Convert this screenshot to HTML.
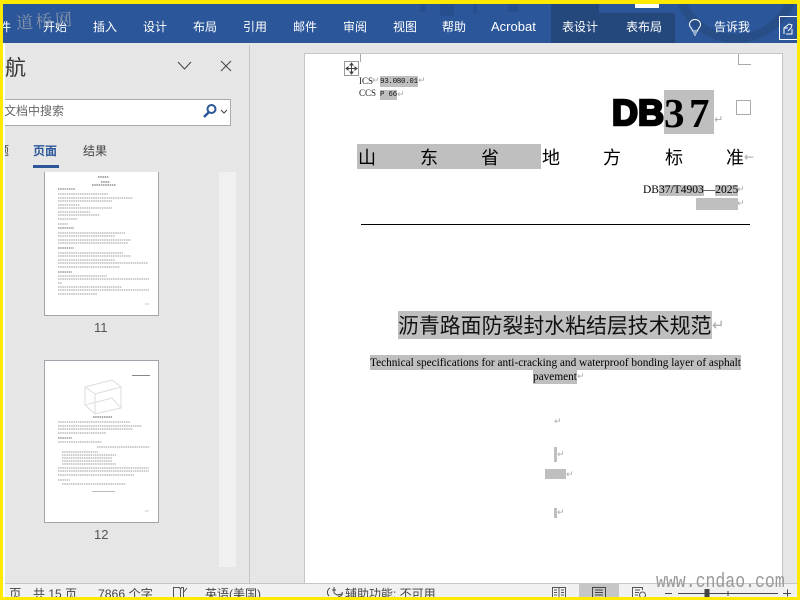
<!DOCTYPE html>
<html lang="zh"><head><meta charset="utf-8"><title>Word</title>
<style>
html,body{margin:0;padding:0;width:800px;height:600px;overflow:hidden;background:#fff}
body{position:relative;font-family:"Liberation Sans","Noto Sans CJK SC",sans-serif}
.a{position:absolute;white-space:nowrap}
.t{position:absolute;white-space:nowrap;color:#fff;font-size:12px;line-height:16px;top:19px}
.h{position:absolute;background:#bfbfbf}
.s{font-family:"Liberation Serif","Noto Sans CJK SC",serif;color:#000}
.c{position:absolute;white-space:nowrap;top:146px;font-size:18px;line-height:22px;color:#000;font-family:"Noto Sans CJK SC",sans-serif}
.m{position:absolute;color:#aaa;font-size:9px;line-height:10px;font-family:"DejaVu Sans",sans-serif}
.st{position:absolute;top:586px;font-size:12.500px;line-height:16px;color:#444;white-space:nowrap}
</style></head><body>

<!-- ribbon -->
<div class="a" style="left:3px;top:4px;width:794px;height:39px;background:#2b579a;overflow:hidden">
 <div class="a" style="left:670px;top:-87px;width:126px;height:126px;box-sizing:border-box;border-radius:50%;border:9px solid #284e88"></div>
 <div class="a" style="left:417px;top:0;width:6px;height:8px;background:#284f8d"></div>
 <div class="a" style="left:437px;top:0;width:14px;height:12px;background:#284f8d"></div>
 <div class="a" style="left:470px;top:0;width:4px;height:10px;background:#284f8d"></div>
 <div class="a" style="left:505px;top:0;width:10px;height:8px;background:#284f8d"></div>
 <div class="a" style="left:548px;top:9px;width:124px;height:30px;background:#24477c"></div>
 <div class="a" style="left:548px;top:0;width:48px;height:9px;background:#24477c"></div>
 <div class="a" style="left:632px;top:0;width:24px;height:4px;background:#fff"></div>
</div>
<div class="t" style="left:-1px">件</div>
<div class="t" style="left:43px">开始</div>
<div class="t" style="left:93px">插入</div>
<div class="t" style="left:143px">设计</div>
<div class="t" style="left:193px">布局</div>
<div class="t" style="left:243px">引用</div>
<div class="t" style="left:293px">邮件</div>
<div class="t" style="left:343px">审阅</div>
<div class="t" style="left:393px">视图</div>
<div class="t" style="left:442px">帮助</div>
<div class="t" style="left:491px;font-size:13px">Acrobat</div>
<div class="t" style="left:562px">表设计</div>
<div class="t" style="left:626px">表布局</div>
<div class="t" style="left:714px">告诉我</div>
<svg class="a" style="left:688px;top:19px" width="14" height="18" viewBox="0 0 14 18" fill="none" stroke="#fff" stroke-width="1"><path d="M4.500 12C4.500 9.500 1.500 8.500 1.500 5.500a5.500 5 0 0 1 11 0C12.500 8.500 9.500 9.500 9.500 12zM5 14h4M6 16h2"/></svg>
<svg class="a" style="left:779px;top:16px" width="18" height="24" viewBox="0 0 18 24" fill="none" stroke="#fff"><path d="M.5.500H18M.5.500V23.500H18"/><path d="M5 18v-6h4M5 12l5-4 3 1-1 3-3 3M7 18h6v-5"/></svg>

<!-- watermark -->
<div class="a" style="left:16px;top:8px;font-size:17px;line-height:24px;letter-spacing:2.500px;color:#8793a8;font-family:'Noto Serif CJK SC',serif;transform:rotate(-4deg)">道桥网</div>

<!-- nav pane -->
<div class="a" style="left:5px;top:43px;width:792px;height:540px;background:#e6e6e6"></div>
<div class="a" style="left:249px;top:45px;width:1px;height:538px;background:#c6c6c6"></div>
<div class="a" style="left:5px;top:56px;font-size:21px;line-height:26px;color:#333">航</div>
<svg class="a" style="left:176px;top:60px" width="18" height="12" fill="none" stroke="#444"><path d="M2 2l6.500 7L15 2"/></svg>
<svg class="a" style="left:219px;top:59px" width="14" height="14" fill="none" stroke="#444"><path d="M2 2l10 10M12 2L2 12"/></svg>
<div class="a" style="left:5px;top:99px;width:225px;height:25px;background:#fff;border:1px solid #ababab;border-left:0"></div>
<div class="a" style="left:4px;top:103px;font-size:12px;line-height:16px;color:#666">文档中搜索</div>
<svg class="a" style="left:202px;top:103px" width="16" height="16" fill="none" stroke="#2b579a" stroke-width="2"><circle cx="9.500" cy="6" r="4"/><path d="M7 9l-5 5" stroke-width="2.500"/></svg>
<svg class="a" style="left:220px;top:109px" width="8" height="6" fill="none" stroke="#444"><path d="M1 1l3 3 3-3"/></svg>
<div class="a" style="left:-3px;top:143px;font-size:12px;line-height:16px;color:#444">题</div>
<div class="a" style="left:33px;top:143px;font-size:12px;line-height:16px;color:#2b579a;font-weight:bold">页面</div>
<div class="a" style="left:33px;top:165px;width:26px;height:3px;background:#2b579a"></div>
<div class="a" style="left:83px;top:143px;font-size:12px;line-height:16px;color:#444">结果</div>
<div class="a" style="left:219px;top:172px;width:17px;height:395px;background:#f0f0f0"></div>

<!-- thumb 11 -->
<svg class="a" style="left:44px;top:172px" width="115" height="144" viewBox="0 0 115 144">
 <rect x=".5" y="-2" width="114" height="145.500" fill="#fff" stroke="#a0a5ab"/>
 <g fill="none" stroke="#999" stroke-width="1" stroke-dasharray="1.500 .7" style="filter:blur(.25px)">
  <path d="M54 5h11M57 10h9M48 13h24" stroke="#555"/>
  <path d="M14 17h17M14 56h16M14 76h16M14 100h14" stroke="#666"/>
  <path d="M14 22h50M14 26h75M14 29h54M14 33h22M14 36h54M14 40h32M14 43h42M14 47h20M14 52h10"/>
  <path d="M14 61h67M14 64h57M14 68h73M14 71h70M14 81h65M14 84h73M14 88h57M14 91h90M14 95h62M14 104h49M14 107h91M14 111h4M14 115h64M14 118h91M14 122h39"/>
  <path d="M101 132h4" stroke="#bbb"/>
 </g>
</svg>
<div class="a" style="left:94px;top:321px;font-size:13px;line-height:14px;color:#555">11</div>

<!-- thumb 12 -->
<svg class="a" style="left:44px;top:360px" width="115" height="163" viewBox="0 0 115 163">
 <rect x=".5" y=".5" width="114" height="162" fill="#fff" stroke="#a0a5ab"/>
 <g fill="none" stroke="#ddd"><path d="M41 27L68 20L77 27L51 34ZM41 27V45L51 54L77 48V27M51 34V54M41 45L68 38L77 48"/></g>
 <path d="M88 15.500h18" stroke="#888"/>
 <g fill="none" stroke="#999" stroke-dasharray="1.500 .7" style="filter:blur(.25px)">
  <path d="M49 57h19" stroke="#555"/>
  <path d="M14 78h14" stroke="#666"/>
  <path d="M14 62h72M14 66h84M14 69h75M14 73h48M14 82h44M53 87h53M18 92h36M18 95h54M18 98h50M18 101h50M18 104h54M14 108h91M14 111h91M14 115h76M14 120h12M18 124h64"/>
  <path d="M101 151h4" stroke="#bbb"/>
 </g>
 <path d="M48 131.500h23" stroke="#bbb"/>
</svg>
<div class="a" style="left:94px;top:528px;font-size:13px;line-height:14px;color:#555">12</div>

<!-- document page -->
<div class="a" style="left:304px;top:53px;width:479px;height:530px;background:#fff;border-left:1px solid #c6c6c6;border-top:1px solid #c6c6c6;border-right:1px solid #c6c6c6;box-sizing:border-box"></div>
<div class="a" style="left:360px;top:54px;width:1px;height:8px;background:#aaa"></div>
<div class="a" style="left:738px;top:54px;width:13px;height:11px;border-left:1px solid #aaa;border-bottom:1px solid #aaa;box-sizing:border-box"></div>
<svg class="a" style="left:344px;top:61px" width="15" height="15" fill="none" stroke="#444"><rect x=".5" y=".5" width="14" height="14" fill="#fff" stroke="#999"/><path d="M2.500 7.500h10M7.500 2.500v10M7.500 2l-1.500 2h3zM7.500 13l-1.500-2h3zM2 7.500l2-1.500v3zM13 7.500l-2-1.500v3z" fill="#444"/></svg>

<div class="a s" style="left:359px;top:76px;font-size:9px;line-height:11px;color:#222">ICS</div>
<div class="h" style="left:380px;top:76px;width:38px;height:11px"></div>
<div class="a" style="left:380px;top:77px;font-size:7.500px;line-height:10px;letter-spacing:-.3px;color:#111;font-family:'Liberation Mono',monospace">93.080.01</div>
<div class="a s" style="left:359px;top:88px;font-size:9px;line-height:11px;color:#222">CCS</div>
<div class="h" style="left:380px;top:90px;width:17px;height:10px"></div>
<div class="a" style="left:380px;top:90px;font-size:7.500px;line-height:10px;letter-spacing:-.3px;color:#111;font-family:'Liberation Mono',monospace">P 66</div>
<div class="m" style="left:372px;top:76px">↵</div>
<div class="m" style="left:418px;top:76px">↵</div>
<div class="m" style="left:397px;top:90px">↵</div>

<div class="h" style="left:664px;top:90px;width:50px;height:44px"></div>
<div class="a" style="left:612px;top:92px;font-family:'Liberation Sans',sans-serif;font-weight:bold;font-size:36px;line-height:42px;color:#000;-webkit-text-stroke:2.500px #000">DB</div>
<div class="a s" style="left:664px;top:91px;font-size:41px;line-height:44px;font-weight:bold;letter-spacing:4.500px">37</div>
<div class="m" style="left:714px;top:115px;font-size:11px">↵</div>
<div class="a" style="left:736px;top:100px;width:15px;height:15px;border:1px solid #aaa;box-sizing:border-box"></div>

<div class="h" style="left:357px;top:144px;width:184px;height:25px"></div>
<div class="c" style="left:358px">山</div>
<div class="c" style="left:420px">东</div>
<div class="c" style="left:481px">省</div>
<div class="c" style="left:542px">地</div>
<div class="c" style="left:603px">方</div>
<div class="c" style="left:665px">标</div>
<div class="c" style="left:726px">准</div>
<div class="m" style="left:744px;top:150px;font-size:12px;line-height:14px">←</div>

<div class="h" style="left:659px;top:185px;width:45px;height:11px"></div>
<div class="h" style="left:715px;top:185px;width:23px;height:11px"></div>
<div class="a s" style="left:643px;top:183px;font-size:11.500px;line-height:14px">DB37/T4903—2025</div>
<div class="m" style="left:737px;top:185px">↵</div>
<div class="h" style="left:696px;top:198px;width:42px;height:12px"></div>
<div class="m" style="left:737px;top:199px">↵</div>
<div class="a" style="left:361px;top:224px;width:389px;height:1px;background:#000"></div>

<div class="h" style="left:398px;top:311px;width:314px;height:28px"></div>
<div class="a" style="left:398px;top:312px;font-size:20.900px;line-height:26px;color:#111;font-family:'Noto Sans CJK SC',sans-serif">沥青路面防裂封水粘结层技术规范</div>
<div class="m" style="left:712px;top:316px;font-size:15px;line-height:18px">↵</div>

<div class="h" style="left:370px;top:355px;width:371px;height:15px"></div>
<div class="a s" style="left:370px;top:356px;font-size:11.300px;line-height:15px">Technical specifications for anti-cracking and waterproof bonding layer of asphalt</div>
<div class="h" style="left:533px;top:370px;width:44px;height:14px"></div>
<div class="a s" style="left:533px;top:370px;font-size:11.300px;line-height:15px">pavement</div>
<div class="m" style="left:577px;top:372px">↵</div>

<div class="m" style="left:554px;top:417px">↵</div>
<div class="h" style="left:554px;top:447px;width:3px;height:15px"></div>
<div class="m" style="left:557px;top:450px">↵</div>
<div class="h" style="left:545px;top:469px;width:21px;height:10px"></div>
<div class="m" style="left:566px;top:470px">↵</div>
<div class="h" style="left:554px;top:508px;width:3px;height:10px"></div>
<div class="m" style="left:557px;top:508px">↵</div>

<!-- status bar -->
<div class="a" style="left:5px;top:583px;width:792px;height:14px;background:#f1f1f1;border-top:1px solid #c6c6c6;box-sizing:border-box"></div>
<div class="a" style="left:579px;top:584px;width:40px;height:13px;background:#c6c6c6"></div>
<div class="st" style="left:9px">页</div>
<div class="st" style="left:33px;font-size:12px">共 15 页</div>
<div class="st" style="left:98px;font-size:12.200px">7866 个字</div>
<svg class="a" style="left:173px;top:587px" width="16" height="10" fill="none" stroke="#555"><path d="M.5 10V.5h6l1 2 1-2h2V10M7.500 3v7M14 1l-4 5"/></svg>
<div class="st" style="left:205px;font-size:12px">英语(美国)</div>
<svg class="a" style="left:327px;top:587px" width="16" height="10" fill="none" stroke="#444"><path d="M3 1a5 5 0 0 0-1 8M7 0v6M5 3h4M7 6l3 2 5-1M15 5a3 3 0 0 1-4 4"/></svg>
<div class="st" style="left:345px;font-size:12px">辅助功能: 不可用</div>
<svg class="a" style="left:552px;top:587px" width="14" height="10" fill="none" stroke="#555"><path d="M.5 10V.5h13V10M7 .5V10M2 3h3M2 5.500h3M2 8h3M9 3h3M9 5.500h3M9 8h3"/></svg>
<svg class="a" style="left:592px;top:587px" width="14" height="10" fill="none" stroke="#444"><path d="M.5 10V.5h13V10M3 3h8M3 5.500h8M3 8h8"/></svg>
<svg class="a" style="left:632px;top:587px" width="15" height="10" fill="none" stroke="#555"><path d="M.5 10V.5h10V3M3 3h5M3 5.500h4M3 8h3"/><circle cx="10.500" cy="8" r="3"/></svg>
<svg class="a" style="left:664px;top:589px" width="130" height="8" fill="none" stroke="#444"><path d="M1 4.500h7M14 4.500h100M64 2v5M119 4.500h8M123.500 .5v7"/><rect x="41" y="0" width="4" height="8" fill="#444"/></svg>
<div class="a" style="left:656px;top:570px;font-size:20px;line-height:26px;color:#999;font-family:'Liberation Mono',monospace;transform-origin:left;transform:scaleX(.825)">www.cndao.com</div>

<!-- frame -->
<div class="a" style="left:3px;top:43px;width:2px;height:554px;background:#fff"></div>
<div class="a" style="left:0;top:0;width:800px;height:4px;background:#ffe900"></div>
<div class="a" style="left:0;top:597px;width:800px;height:3px;background:#ffe900"></div>
<div class="a" style="left:0;top:0;width:3px;height:600px;background:#ffe900"></div>
<div class="a" style="left:797px;top:0;width:3px;height:600px;background:#ffe900"></div>
</body></html>
